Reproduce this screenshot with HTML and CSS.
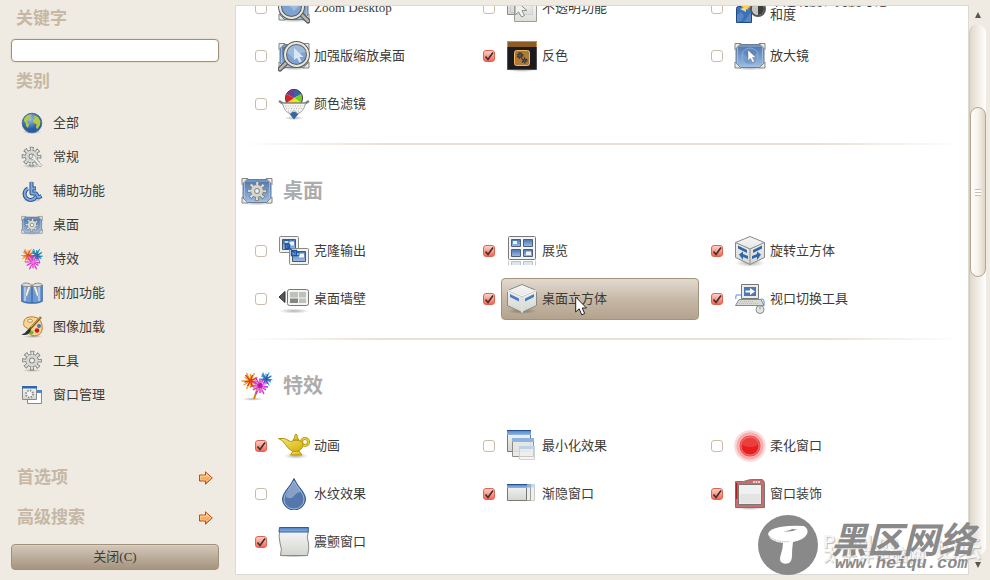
FILE: index.html
```html
<!DOCTYPE html>
<html lang="zh-CN">
<head>
  <meta charset="utf-8">
  <title>关键字</title>
  <link rel="stylesheet" href="styles.css">
</head>
<body>
  <!-- shared gradients and icons -->
  <svg class="defs" width="0" height="0" aria-hidden="true">
    <defs>
      <linearGradient id="blue" x1="0" y1="0" x2="0" y2="1"><stop offset="0" stop-color="#4a74ad"/><stop offset="1" stop-color="#9dbfe6"/></linearGradient>
      <linearGradient id="grey" x1="0" y1="0" x2="0" y2="1"><stop offset="0" stop-color="#f6f6f5"/><stop offset="1" stop-color="#d3d6d0"/></linearGradient>
      <linearGradient id="bar" x1="0" y1="0" x2="0" y2="1"><stop offset="0" stop-color="#4a7fc4"/><stop offset="1" stop-color="#8fb6e3"/></linearGradient>
      <linearGradient id="orange" x1="0" y1="0" x2="0" y2="1"><stop offset="0" stop-color="#fbe3a0"/><stop offset="1" stop-color="#ea7a2c"/></linearGradient>
      <linearGradient id="gold" x1="0" y1="0" x2="1" y2="1"><stop offset="0" stop-color="#f7ea6a"/><stop offset="1" stop-color="#d3ad0c"/></linearGradient>
      <radialGradient id="shade"><stop offset="0" stop-color="#000" stop-opacity=".3"/><stop offset="1" stop-color="#000" stop-opacity="0"/></radialGradient>
      <radialGradient id="sea" cx=".4" cy=".3"><stop offset="0" stop-color="#9cc0ea"/><stop offset="1" stop-color="#2c5c9e"/></radialGradient>
      <path id="burst" d="M0 0L8 1M0 0L6 4M0 0L4 8M0 0L0 7M0 0L-4 8M0 0L-7 4M0 0L-9 0M0 0L-6-4M0 0L-4-8M0 0L0-7M0 0L4-8M0 0L7-4"/>
      <path id="rays" d="M0 0L6 2M0 0L2 6M0 0L-3 5M0 0L-6 1M0 0L-5-6M0 0L2-6M0 0L6-3"/>
    </defs>
    <symbol id="gear" viewBox="0 0 32 32">
      <circle cx="16" cy="16" r="11.5" fill="none" stroke="#7d7f7b" stroke-width="7" stroke-dasharray="5.400 3.630" stroke-dashoffset="2.700"/>
      <circle cx="16" cy="16" r="10.4" fill="#7d7f7b"/>
      <circle cx="16" cy="16" r="11.2" fill="none" stroke="#dfe0dd" stroke-width="5" stroke-dasharray="3 5.800" stroke-dashoffset="1.500"/>
      <circle cx="16" cy="16" r="9.2" fill="#d5d7d3"/>
      <circle cx="16" cy="16" r="4.4" fill="#858783"/>
      <circle cx="16" cy="16" r="2.900" fill="#f2f1ee"/>
    </symbol>
    <symbol id="screen" viewBox="0 0 32 32">
      <ellipse cx="16" cy="28" rx="15" ry="2.5" fill="url(#shade)"/>
      <rect x="2" y="4.5" width="28" height="23" rx="1" fill="url(#blue)" stroke="#6f7d8e"/>
      <path d="M3.500 6h25v20h-25z" fill="none" stroke="#a9c3e2" stroke-width=".8"/>
      <path d="M1 3.500h6L1 9.500zM31 3.500h-6l6 6zM1 28h6l-6-6zM31 28h-6l6-6z" fill="#e9eae7" stroke="#858783"/>
    </symbol>
    <symbol id="desktop" viewBox="0 0 32 32">
      <use href="#screen"/>
      <use href="#gear" x="5.500" y="5.500" width="21" height="21"/>
    </symbol>
    <symbol id="spark" viewBox="0 0 32 32">
      <ellipse cx="12" cy="29" rx="11" ry="1.8" fill="url(#shade)"/>
      <path d="M17 17l-4 12" stroke="#c98b14" stroke-width="2"/>
      <g stroke-width="1.400">
        <use href="#burst" x="9.500" y="11" stroke="#f5a12a"/>
        <use href="#rays" x="9.500" y="11" stroke="#dd3a22"/>
        <g transform="translate(25 9) scale(.8)"><use href="#burst" stroke="#3da0d8"/><use href="#rays" stroke="#2a58a8"/></g>
        <use href="#burst" x="19" y="16" stroke="#d02bd8"/>
        <use href="#rays" x="19" y="16" stroke="#f272d8"/>
      </g>
      <circle cx="19" cy="15.500" r="2.500" fill="#b017b9"/>
    </symbol>
    <symbol id="lens" viewBox="0 0 32 32">
      <path d="M8 23l-6 6" stroke="#555753" stroke-width="5" stroke-linecap="round"/>
      <path d="M8 23l-6 6" stroke="#b4b6b2" stroke-width="2.500" stroke-linecap="round"/>
      <circle cx="18.500" cy="14.500" r="11.500" fill="#7ea3d2" stroke="#5c5e5a" stroke-width="4"/>
      <circle cx="18.500" cy="14.500" r="11.500" fill="none" stroke="#e7e8e4" stroke-width="2"/>
      <path d="M9 12a10 10 0 0 1 19 0q-9 1-12 7" fill="#fff" opacity=".25"/>
    </symbol>
    <symbol id="arrow" viewBox="0 0 14 14">
      <path d="M.5 4h6V.8L13.300 7l-6.800 6.200V10h-6z" fill="url(#orange)" stroke="#c04a1c"/>
      <path d="M1.600 5.100h6V3.400L11.700 7l-4.100 3.600V8.900h-6z" fill="none" stroke="#fbd79a" stroke-width=".7"/>
    </symbol>
  </svg>

  <div class="window">
    <aside class="sidebar">
      <h2><label for="keyword">关键字</label></h2>
      <input class="keyword" id="keyword" type="text">
      <h2 class="categories-title">类别</h2>
      <ul class="categories">
        <li><a href="#"><svg viewBox="0 0 22 22"><ellipse cx="11" cy="20" rx="10" ry="2" fill="url(#shade)"/><circle cx="11" cy="11" r="9.800" fill="url(#sea)" stroke="#4670a5"/><path d="M3 7l3-3.500 4-1 1 1-2 1 1 1.500-3 2-1 2 2 2-1 4-2-2v-3l-2-2zM13 3.500l4 1.500 2.500 4-.5 4-2.500 4-1.500-1 .5-4-3-1-.5-3 2-2-1.500-1z" fill="#b3cb3c"/></svg>全部</a></li>
        <li><a href="#"><svg viewBox="0 0 22 22"><ellipse cx="11" cy="20" rx="10" ry="2" fill="url(#shade)"/><use href="#gear" width="21" height="21"/><path d="M11 9.500a3 3 0 0 1 4 3l6 7-2 1.500-6-7a3 3 0 0 1-3-3l2 .5z" fill="#f2f2f0" stroke="#a0a29e" stroke-width=".8"/></svg>常规</a></li>
        <li><a href="#"><svg viewBox="0 0 22 22"><ellipse cx="11" cy="20.500" rx="10" ry="1.500" fill="url(#shade)"/><g fill="none" stroke-linejoin="round"><path d="M7 8.500a6 6 0 1 0 8 8M10.500 2v11.500h4.500l2.500 4 3-1.500M10 8.500h5" stroke="#26528f" stroke-width="4"/><path d="M7 8.500a6 6 0 1 0 8 8M10.500 1.500v12h4.500l2.500 4 2.500-1.300M10 8.500h4.500" stroke="#7fa9dc" stroke-width="2"/></g></svg>辅助功能</a></li>
        <li><a href="#"><svg viewBox="0 0 32 32"><use href="#desktop"/></svg>桌面</a></li>
        <li><a href="#"><svg viewBox="0 0 22 22"><g stroke-width="1.300"><g transform="translate(7 7.500) scale(.8)"><use href="#burst" stroke="#f5a12a"/><use href="#rays" stroke="#e04a24"/></g><g transform="translate(15.500 7.500) scale(.8)"><use href="#burst" stroke="#3399c8"/><use href="#rays" stroke="#16728c"/></g><g transform="translate(12 14) scale(.9)"><use href="#burst" stroke="#ce2ad5"/><use href="#rays" stroke="#f37ad4"/></g></g></svg>特效</a></li>
        <li><a href="#"><svg viewBox="0 0 22 22"><ellipse cx="11" cy="21" rx="10" ry="1.500" fill="url(#shade)"/><path d="M.8 3l6 1h8.400l6-1v16.500l-6 1.500H7l-6.200-1.500z" fill="#6b9bd6" stroke="#2d5b98"/><path d="M4 5v14M18 5v14" stroke="#a9c8ee" stroke-width="2"/><path d="M11 5v16" stroke="#2d5b98"/><path d="M10 4L6 15l-2-2 3-9zM12 4l4 11 2-2-3-9z" fill="#eeefec" stroke="#999b97" stroke-width=".8"/><path d="M11 3.500C8 .2 2 .6 1 2.500s6 3 10 1.200c4 1.800 11 .5 10-1.200s-7-2.200-10 1z" fill="#dcded9" stroke="#888a86"/></svg>附加功能</a></li>
        <li><a href="#"><svg viewBox="0 0 22 22"><ellipse cx="12" cy="20.500" rx="10" ry="1.500" fill="url(#shade)"/><path d="M3 5C4 1 10 0 15 1.500 20 3 21.800 9 21 14s-6 7-11 5-1-6-4-7-4-3-3-7z" fill="#f5d69b" stroke="#c47d1d"/><ellipse cx="9" cy="4.800" rx="2.500" ry="1.600" fill="#efeae2" stroke="#c47d1d" stroke-width=".8"/><circle cx="18" cy="10" r="2" fill="#3f76bf"/><circle cx="16" cy="14.500" r="2.300" fill="#d01818"/><circle cx="10.500" cy="16.500" r="2" fill="#6bbd26"/><path d="M20 1L8 14" stroke="#8a5b1b" stroke-width="2.500"/><path d="M19.500 1L10 11" stroke="#ddaa55"/><path d="M8.500 12.500L5.500 15Q4 18 .5 18.500 6 20 8.500 17l1.500-3z" fill="#2e3436"/></svg>图像加载</a></li>
        <li><a href="#"><svg viewBox="0 0 22 22"><ellipse cx="11" cy="20.500" rx="10" ry="1.500" fill="url(#shade)"/><use href="#gear" width="22" height="21"/></svg>工具</a></li>
        <li><a href="#"><svg viewBox="0 0 22 22"><path d="M6.500 6.500h14v13h-14z" fill="#fff" stroke="#888a86"/><path d="M6 6h15v3H6z" fill="#4a86cf"/><path d="M1.500 2.500h14v13h-14z" fill="url(#grey)" stroke="#888a86"/><path d="M1 2h15v2.500H1z" fill="#2f67ae"/><circle cx="8.500" cy="10" r="3.500" fill="#f4f4f2" stroke="#8a8c88" stroke-width="2" stroke-dasharray="1.400 1.350"/></svg>窗口管理</a></li>
      </ul>
      <a class="more" href="#">首选项 <svg><use href="#arrow"/></svg></a>
      <a class="more" href="#">高级搜索 <svg><use href="#arrow"/></svg></a>
      <button class="close" type="button">关闭(C)</button>
    </aside>

    <main class="panel">
      <section>
        <div class="plugins">
          <div class="plugin"><input type="checkbox" aria-label="Zoom Desktop"><button type="button"><svg viewBox="0 0 32 32"><use href="#screen"/><g transform="translate(32 0) scale(-1 1)"><use href="#lens"/></g></svg><span>Zoom Desktop</span></button></div>
          <div class="plugin"><input type="checkbox" aria-label="不透明功能"><button type="button"><svg viewBox="0 0 32 32"><path d="M1.500 3.500h25v19h-25z" fill="url(#grey)" stroke="#888a86"/><path d="M4.500 5.500h20v15h-20z" fill="none" stroke="#c5c7c3"/><path d="M8.500 9.500h22v20h-22z" fill="url(#grey)" stroke="#9b9d99" fill-opacity=".8"/><path d="M9 8v15l3.500-3 3 5 3-1.500-2.500-5h5z" fill="#f0f0ef" stroke="#8e908c"/></svg><span>不透明功能</span></button></div>
          <div class="plugin"><input type="checkbox" aria-label="不透明度、亮度与饱和度"><button type="button"><svg viewBox="0 0 32 32"><path d="M2.500 16.500q0-2 2-2h13v16h-15z" fill="#3a71b9" stroke="#1f4a87"/><path d="M10 30l7-10v10zM3 23l4-3 3 4-3 5-4 1z" fill="#6d96cb" opacity=".6"/><circle cx="12" cy="11" r="5.500" fill="#fcd53a" stroke="#e8a31c"/><path d="M6 17l6-2 3 3-3-1v3z" fill="#f6d490"/><circle cx="24" cy="17" r="7" fill="#e4e5e2" stroke="#555753" stroke-width="2"/><path d="M24 11a6 6 0 0 0 0 12z" fill="#c4c5c2"/><path d="M24 11a6 6 0 0 1 0 12z" fill="#3c3e3b"/></svg><span>不透明度、亮度与饱和度</span></button></div>
          <div class="plugin"><input type="checkbox" aria-label="加强版缩放桌面"><button type="button"><svg viewBox="0 0 32 32"><use href="#screen"/><use href="#lens"/><path d="M16 8v12l3-2 2.500 4.500 2-1-2-4.500h4z" fill="#d9e6f5"/></svg><span>加强版缩放桌面</span></button></div>
          <div class="plugin"><input type="checkbox" aria-label="反色" checked><button type="button"><svg viewBox="0 0 32 32"><ellipse cx="16" cy="30" rx="15" ry="2" fill="url(#shade)"/><path d="M1.500 1.500h29v28h-29z" fill="#1b1b1f" stroke="#4e4e50"/><path d="M2 2h28v5H2z" fill="#8c5a24"/><path d="M1.500 7V1.500h29V7" fill="none" stroke="#cc9141"/><rect x="8.500" y="10.500" width="15" height="15" rx="2" fill="#b07a3b" stroke="#efb85c"/><g fill="#56504a" stroke="#302b27" stroke-dasharray="1 1"><circle cx="14" cy="15.500" r="2.500" stroke-width="2"/><circle cx="18.500" cy="20.500" r="2" stroke-width="2"/></g></svg><span>反色</span></button></div>
          <div class="plugin"><input type="checkbox" aria-label="放大镜"><button type="button"><svg viewBox="0 0 32 32"><use href="#screen"/><circle cx="16" cy="16" r="8" fill="#5b86be" stroke="#86aad8"/><path d="M8 12l8 8 8-8v8l-8 4-8-4z" fill="#8fb2dd" opacity=".5"/><path d="M14 10v10.500l2.500-2 2 4 2-1-2-4h3.500z" fill="#fff" stroke="#777" stroke-width=".5"/></svg><span>放大镜</span></button></div>
          <div class="plugin"><input type="checkbox" aria-label="颜色滤镜"><button type="button"><svg viewBox="0 0 32 32"><ellipse cx="16" cy="30" rx="10" ry="2" fill="url(#shade)"/><path d="M16 10L8.500 6A9 9 0 0 1 16 1z" fill="#7a3a8c"/><path d="M16 10V1a9 9 0 0 1 7.500 5z" fill="#3465a4"/><path d="M16 10l7.500-4q2 5 0 9z" fill="#73d216"/><path d="M16 10l7.500 5-3 3h-9l-3-3z" fill="#f5e11b"/><path d="M16 10l-7.500-4q-2 5 0 9z" fill="#e02020"/><circle cx="16" cy="10" r="8.600" fill="none" stroke="#4a4058"/><path d="M10 24h12l-6 7.500z" fill="#3465a4"/><path d="M1 13l4 2.500h22l4-2.500" fill="none" stroke="#7e807c" stroke-width="2.500"/><path d="M4.500 15.500h23q-2 9-8 10l-3.500-3-3.500 3q-6-1-8-10z" fill="#f3f3f1" stroke="#a3a5a0"/><path d="M7 18h18M8 20.500h16M10 23h12" stroke="#b4b6b1" stroke-dasharray="1 1.500"/></svg><span>颜色滤镜</span></button></div>
        </div>
      </section>
      <hr>
      <section>
        <h1><svg><use href="#desktop"/></svg>桌面</h1>
        <div class="plugins">
          <div class="plugin"><input type="checkbox" aria-label="克隆输出"><button type="button"><svg viewBox="0 0 32 32"><g id="mon"><rect x="1.500" y="1.500" width="19" height="16" rx="1" fill="#f2f2f0" stroke="#888a86"/><path d="M4.500 4.500h13v10h-13z" fill="url(#blue)" stroke="#4d5866"/><path d="M11 6.500h5v4h-5z" fill="#eef3fa"/><path d="M6 5.500h5v3H6z" fill="#bfd3ec" stroke="#2f5f9f"/></g><use href="#mon" x="10" y="12"/><path d="M7.500 9.500h4v4h-4zM13.500 15.500h5v5h-5zM9 11l8 7" fill="#6b98d3" stroke="#1d56a7" stroke-width="1.500"/></svg><span>克隆输出</span></button></div>
          <div class="plugin"><input type="checkbox" aria-label="展览" checked><button type="button"><svg viewBox="0 0 32 32"><rect x="2.500" y="1.500" width="27" height="23" rx="1" fill="#f5f5f4" stroke="#777975"/><g fill="url(#blue)" stroke="#4d6079"><path d="M5.500 4.500h9v7h-9z"/><path d="M17.500 4.500h9v7h-9z"/><path d="M5.500 14.500h9v7h-9z"/><path d="M17.500 14.500h9v7h-9z"/></g><path d="M7 6h4v3H7zM20 16.500h5v3.500h-5z" fill="#edf3fa"/><path d="M2.500 25.500v5M29.500 25.500v5" stroke="#ccc"/><path d="M5.500 30v-3.500h9V30M17.500 30v-3.500h9V30" fill="#dce5ef" stroke="#bbc1c9"/></svg><span>展览</span></button></div>
          <div class="plugin"><input type="checkbox" aria-label="旋转立方体" checked><button type="button"><svg viewBox="0 0 32 32"><ellipse cx="16" cy="28" rx="15" ry="4" fill="url(#shade)"/><path d="M16 1.500l14.500 6v15L16 29.500l-14.500-7v-15z" fill="url(#grey)" stroke="#888a86"/><path d="M1.500 7.500L16 14l14.500-6.500M16 14v15.500" fill="none" stroke="#888a86"/><path d="M4 10.500l9 4.500v3l-9-4.500zM28 10.500L19 15v3l9-4.500z" fill="#3465a4"/><path d="M5 19.500l4-3v2.500l5 2v3l-5-2V25zM27 19.500l-4-3v2.500l-5 2v3l5-2V25z" fill="#2f66ae"/></svg><span>旋转立方体</span></button></div>
          <div class="plugin"><input type="checkbox" aria-label="桌面墙壁"><button type="button"><svg viewBox="0 0 32 32"><ellipse cx="16" cy="28" rx="15" ry="2.500" fill="url(#shade)"/><path d="M1 14l6-5.500v11z" fill="#555753" stroke="#333"/><rect x="9.500" y="6.500" width="21" height="16" rx="2" fill="#f4f4f3" stroke="#777975"/><path d="M12 9h8v5.500h-8zM21 9h7v5.500h-7zM21 15.500h7V20h-7z" fill="#bfc1bd"/><path d="M12 15.500h8V20h-8z" fill="#858783"/></svg><span>桌面墙壁</span></button></div>
          <div class="plugin selected"><input type="checkbox" aria-label="桌面立方体" checked><button type="button"><svg viewBox="0 0 32 32"><ellipse cx="16" cy="28" rx="15" ry="3" fill="url(#shade)"/><path d="M16 1.500l14.500 6v15L16 29.500l-14.500-7v-15z" fill="url(#grey)" stroke="#888a86"/><path d="M1.500 7.500L16 14l14.500-6.500M16 14v15.500" fill="none" stroke="#fff" stroke-width="2"/><path d="M1.500 7.500L16 14l14.500-6.500M16 14v15.500" fill="none" stroke="#a5a7a3" stroke-width=".7"/><path d="M4 11l9 4.500v3L4 14zM28 11l-9 4.500v3l9-4.500z" fill="#4a7cc0"/></svg><span>桌面立方体</span></button><svg class="pointer" viewBox="0 0 12 20"><path d="M.7 1v15l3.500-3.200 2.500 6 3-1.300-2.500-5.500h4.300z" fill="#fff" stroke="#222"/></svg></div>
          <div class="plugin"><input type="checkbox" aria-label="视口切换工具" checked><button type="button"><svg viewBox="0 0 32 32"><path d="M8 12H3q-2 1-1 4M27 16q4 0 3 6l-4 2" fill="none" stroke="#8ab4e6" stroke-width="1.500"/><path d="M7.500 1.500h17v14h-17z" fill="#ecedea" stroke="#777975"/><path d="M10 4h12v9H10z" fill="#4c79b5"/><path d="M11.500 7.500h4.500V5l5 3.500-5 3.500V9.500h-4.500z" fill="#fff"/><path d="M5 16.500h22l3 6H1.500z" fill="#d8dad5" stroke="#888a86"/><path d="M6 18.500h14M5 20.500h20" stroke="#b9bbb7" stroke-dasharray="1 1"/><circle cx="26" cy="26.500" r="4" fill="#e5e6e3" stroke="#888a86"/><path d="M26 22.500v4" stroke="#999"/></svg><span>视口切换工具</span></button></div>
        </div>
      </section>
      <hr>
      <section>
        <h1><svg><use href="#spark"/></svg>特效</h1>
        <div class="plugins">
          <div class="plugin"><input type="checkbox" aria-label="动画" checked><button type="button"><svg viewBox="0 0 32 32"><ellipse cx="18" cy="26" rx="12" ry="3" fill="url(#shade)"/><g fill="url(#gold)" stroke="#b8940d"><circle cx="27" cy="12" r="3.500" fill="none" stroke-width="3"/><circle cx="27" cy="12" r="3.500" fill="none" stroke="#ecd237" stroke-width="1.300"/><path d="M15 21h6l3 4H12.500z"/><path d="M.5 8.500h6l6 3q5-3 12 0 2 8-6 10-7 0-11-7Q5 10 .5 8.500z"/><path d="M15 10q2-2 2-5 1-2 2 0 0 3 2 5z"/></g></svg><span>动画</span></button></div>
          <div class="plugin"><input type="checkbox" aria-label="最小化效果"><button type="button"><svg viewBox="0 0 32 32"><path d="M1.500.5h23v21h-23z" fill="url(#grey)" stroke="#777975"/><path d="M1 0h24v5H1z" fill="url(#bar)"/><path d="M1 .5h24" stroke="#214f8f"/><path d="M6.500 8.500h21v18h-21z" fill="#e6e7e4" fill-opacity=".85" stroke="#8b8e8a"/><path d="M6 8h22v4H6z" fill="#8fb3df"/><path d="M13.500 16.500h15v13h-15z" fill="#f0f0ee" fill-opacity=".6" stroke="#d0d2ce"/><path d="M13 16h16v3H13z" fill="#bdd1ea"/></svg><span>最小化效果</span></button></div>
          <div class="plugin"><input type="checkbox" aria-label="柔化窗口"><button type="button"><svg viewBox="0 0 32 32"><circle cx="16" cy="16" r="15.800" fill="#fbd9d9"/><circle cx="16" cy="16" r="13.500" fill="#f7abab"/><circle cx="16" cy="16" r="11" fill="#ef4a4a" stroke="#fff" stroke-width=".5"/><circle cx="16" cy="16" r="9" fill="#e81d1d" stroke="#f78a8a" stroke-width=".7"/><path d="M8 15a8 8 0 0 1 16 0q-8 4-16 0z" fill="#fff" opacity=".15"/></svg><span>柔化窗口</span></button></div>
          <div class="plugin"><input type="checkbox" aria-label="水纹效果"><button type="button"><svg viewBox="0 0 32 32"><path d="M16 .5q2 5 8 12 3.500 5 3.500 8.500a11.500 11 0 0 1-23 0q0-3.500 3.500-8.500 6-7 8-12z" fill="#5578ac" stroke="#2f5590"/><path d="M16 3q2 4 7 10.500 3.500 5 3 8a10 9.500 0 0 1-20 0q-.5-3 3-8Q14 7 16 3z" fill="none" stroke="#9db7da"/><path d="M16 4l7 10q-4 0-7 4t-8 1q0-3 2-6z" fill="#fff" opacity=".3"/></svg><span>水纹效果</span></button></div>
          <div class="plugin"><input type="checkbox" aria-label="渐隐窗口" checked><button type="button"><svg viewBox="0 0 32 32"><path d="M7.500 6.500h21v16h-21z" fill="#f0f1ef" stroke="#c9cbc8"/><path d="M23 6.500h6v3h-6z" fill="#c5d8ef"/><path d="M5.500 6.500h19v16h-19z" fill="#ecedeb" stroke="#a0a29f"/><path d="M20 6.500h5v3h-5z" fill="#8fb2dd"/><path d="M1.500 6.500h19v16h-19z" fill="url(#grey)" stroke="#777975"/><path d="M1 6h20v4H1z" fill="url(#bar)"/><path d="M1 6.500h20" stroke="#214f8f"/></svg><span>渐隐窗口</span></button></div>
          <div class="plugin"><input type="checkbox" aria-label="窗口装饰" checked><button type="button"><svg viewBox="0 0 32 32"><ellipse cx="16" cy="30" rx="15" ry="2" fill="url(#shade)"/><path d="M1.500 29.500v-26h8Q16 1 20 1.500h8q2.500 1 2.500 4v24z" fill="#cf6a6d" stroke="#777"/><path d="M2.500 5v16" stroke="#b11a20" stroke-width="1.500"/><path d="M4.500 6.500h23v20h-23z" fill="#f1f1f1" stroke="#777975"/><path d="M5.500 16h21v9.500h-21z" fill="#e4e4e4"/><path d="M19 4h7" stroke="#fff" stroke-width="1.500" stroke-dasharray="1.800 .8"/></svg><span>窗口装饰</span></button></div>
          <div class="plugin"><input type="checkbox" aria-label="震颤窗口" checked><button type="button"><svg viewBox="0 0 32 32"><ellipse cx="16" cy="30" rx="15" ry="1.500" fill="url(#shade)"/><path d="M1.500 5h29q-2.500 6 0 12 1 6-1 12.500h-27Q4.500 23 2 17q-1.500-6-.5-12z" fill="url(#grey)" stroke="#888a86"/><path d="M1.500 1.500h29L30 6H1z" fill="url(#bar)" stroke="#2c5b9b"/></svg><span>震颤窗口</span></button></div>
        </div>
      </section>
    </main>

    <div class="scrollbar">
      <button type="button" aria-label="▲"><svg viewBox="0 0 6 6"><path d="M3 0l3 6H0z" fill="#5b554c"/></svg></button>
      <div class="trough"><div class="thumb"></div></div>
      <button type="button" aria-label="▼"><svg viewBox="0 0 6 6"><path d="M3 6l3-6H0z" fill="#5b554c"/></svg></button>
    </div>
  </div>

  <div class="ghost">
    <div><b>Pconline</b><span>太平洋电脑网</span></div>
    <strong>论坛</strong>
  </div>
  <div class="watermark">
    <svg viewBox="0 0 60 60"><circle cx="30" cy="30" r="30" fill="#898989"/><path d="M10 19q1-5 12-7 12-2 24-1 5 3 3 8-3 6-14 8-1 7-1 13 0 6-3 8-5 2-8-1-2-2 0-8 2-6 2-11-13-1-15-9z" fill="#fff"/><path d="M11 21q8 7 20 5.500" fill="none" stroke="#aaa" stroke-dasharray="1 .8"/><path d="M25 16q6 0 9-2l5 .5q-6 3-14 1.500z" fill="#898989"/></svg>
    <div><strong>黑区网络</strong><span>www.heiqu.com</span></div>
  </div>
</body>
</html>
```
FILE: styles.css
```css
* {
  box-sizing: border-box;
}

body {
  margin: 0;
  background: #efebe3;
  color: #3c3b37;
  font: 13px/14px "Liberation Serif", "Noto Sans CJK SC", serif;
  overflow: hidden;
}

button, input {
  font: inherit;
  color: inherit;
}

a {
  color: inherit;
  text-decoration: none;
}

svg {
  display: block;
  flex: none;
}

.defs {
  position: absolute;
}

.window {
  display: flex;
  height: 100vh;
  padding: 5px 4px 5px 0;
}

/* left column */
.sidebar {
  display: flex;
  flex-direction: column;
  width: 235px;
  padding: 0 16px 5px 11px;
}

.sidebar h2 {
  margin: 0 0 6px;
  padding-left: 5px;
  font-size: 17px;
  line-height: 28px;
  color: #c6b8a4;
}

.sidebar .categories-title {
  margin: 6px 0 10px;
}

.keyword {
  width: 100%;
  height: 23px;
  padding: 0 6px;
  border: 1px solid #a09078;
  border-radius: 4px;
  background: #fff;
  box-shadow: 0 0 0 1px #e9e0d2;
}

.categories {
  margin: 0 0 auto;
  padding: 0 0 0 10px;
  list-style: none;
}

.categories a {
  display: flex;
  align-items: center;
  gap: 10px;
  height: 34px;
}

.categories svg {
  width: 22px;
  height: 22px;
}

.more {
  display: flex;
  justify-content: space-between;
  align-items: center;
  height: 40px;
  padding: 0 6px;
  font-size: 17px;
  font-weight: bold;
  color: #c6b8a4;
}

.more svg {
  width: 14px;
  height: 14px;
}

.close {
  height: 26px;
  margin-top: 6px;
  padding: 0;
  border: 1px solid #a0907c;
  border-radius: 4px;
  background: linear-gradient(#d3c8bb, #bcae9c 50%, #a6947e);
  box-shadow: inset 0 1px #d9cfc3;
}

/* plugin list, scrolled so the top row is cut off */
.panel {
  display: flex;
  flex: 1;
  flex-direction: column;
  justify-content: flex-end;
  padding-bottom: 8px;
  border: 1px solid #dcdad5;
  background: #fff;
  overflow: hidden;
}

.panel h1 {
  display: flex;
  align-items: center;
  gap: 10px;
  height: 64px;
  margin: 0 0 4px;
  padding-left: 5px;
  font-size: 20px;
  color: #acacac;
}

.panel h1 svg {
  width: 32px;
  height: 32px;
}

.panel hr {
  flex: none;
  width: 98%;
  height: 2px;
  margin: 15px auto 14px;
  border: 0;
  background: linear-gradient(90deg, #fff, #e8e0d5 20%, #e8e0d5 80%, #fff);
}

.plugins {
  display: grid;
  grid-template-columns: repeat(3, 1fr);
  column-gap: 12px;
  padding: 0 41px 0 19px;
}

.plugin {
  position: relative;
  display: flex;
  align-items: center;
  gap: 6px;
  height: 48px;
}

.plugin input {
  appearance: none;
  flex: none;
  width: 12px;
  height: 12px;
  margin: 0;
  border: 1px solid #c9bcab;
  border-radius: 3px;
  background: #fff;
}

.plugin input:checked {
  border-color: #e4604f;
  background: url("data:image/svg+xml,%3Csvg xmlns='http://www.w3.org/2000/svg' viewBox='0 0 10 10'%3E%3Cpath d='M1.500 5.500L4 8.500 9 1.500' fill='none' stroke='%23333' stroke-width='1.600'/%3E%3C/svg%3E"), linear-gradient(#fdd0c8, #fa6450);
}

.plugin button {
  display: flex;
  flex: 1;
  align-items: center;
  gap: 4px;
  height: 42px;
  padding: 0 36px 0 4px;
  border: 1px solid transparent;
  border-radius: 4px;
  background: none;
  text-align: left;
}

.plugin button svg {
  width: 32px;
  height: 32px;
}

.selected button {
  border-color: #a3927c;
  background: linear-gradient(#e2dad0, #c7b9a7 50%, #b3a28d);
}

.pointer {
  position: absolute;
  top: 21px;
  left: 92px;
  width: 12px;
  height: 20px;
}

/* scrollbar */
.scrollbar {
  display: flex;
  flex-direction: column;
  width: 17px;
}

.scrollbar button {
  display: flex;
  align-items: center;
  justify-content: center;
  height: 20px;
  padding: 0;
  border: 0;
  background: none;
}

.scrollbar svg {
  width: 6px;
  height: 6px;
}

.trough {
  flex: 1;
  padding-top: 82px;
  border-left: 1px solid #d5c9b8;
  border-radius: 8px;
  background: linear-gradient(90deg, #e2d8ca, #fff);
}

.thumb {
  height: 170px;
  border: 1px solid #b5a68f;
  border-radius: 8px;
  background:
    repeating-linear-gradient(#c9bda9 0 1px, #fff 1px 3px) center / 6px 7px no-repeat,
    linear-gradient(90deg, #fff, #f6f2ec 50%, #e0d5c5);
}

/* marks over the bottom right corner */
.ghost, .watermark {
  position: absolute;
  display: flex;
  align-items: center;
  pointer-events: none;
}

.ghost {
  right: 9px;
  bottom: 17px;
  gap: 8px;
  color: #f4f4f4;
  text-shadow: 1px 1px 1px #bbb;
  font-family: "Liberation Sans", "Noto Sans CJK SC", sans-serif;
}

.ghost div {
  display: flex;
  flex-direction: column;
}

.ghost b {
  font-size: 18px;
}

.ghost span {
  font-size: 17px;
}

.ghost strong {
  font-size: 24px;
}

.watermark {
  right: 15px;
  bottom: 5px;
  gap: 13px;
  color: #8a8a8a;
}

.watermark svg {
  width: 60px;
  height: 60px;
}

.watermark div {
  display: flex;
  flex-direction: column;
}

.watermark strong {
  font: italic bold 36px/36px "Noto Sans CJK SC", sans-serif;
}

.watermark span {
  padding-left: 4px;
  font: italic bold 17px/17px "Liberation Mono", monospace;
}
```
